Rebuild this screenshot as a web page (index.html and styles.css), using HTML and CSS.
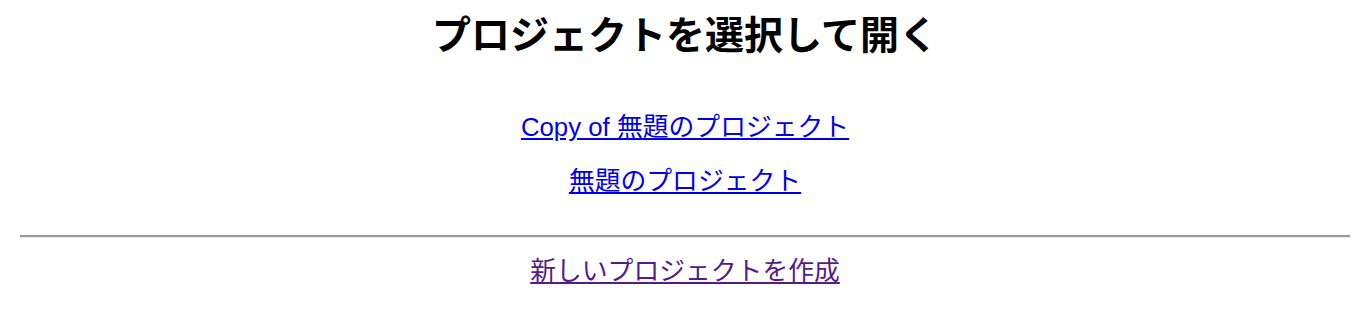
FILE: index.html
```html
<!DOCTYPE html>
<html>
<head>
  <meta charset="utf-8">
  <title>プロジェクトを選択して開く</title>
  <link rel="stylesheet" href="styles.css">
</head>
<body>
  <div class="page">
    <h1 class="page-title">プロジェクトを選択して開く</h1>

    <!-- 既存のプロジェクト -->
    <ul class="project-list">
      <li class="project-item"><a href="#copy">Copy of 無題のプロジェクト</a></li>
      <li class="project-item"><a href="#untitled">無題のプロジェクト</a></li>
    </ul>

    <hr class="divider">

    <div class="project-item">
      <a class="visited" href="#new">新しいプロジェクトを作成</a>
    </div>
  </div>
</body>
</html>
```

FILE: styles.css
```css
body {
  margin: 0;
  padding: 0;
  background: #fff;
  color: #000;
  font-family: "Liberation Sans", "Noto Sans CJK JP", sans-serif;
}

.page {
  padding: 8px 2px 0 20px;
  text-align: center;
}

.page-title {
  margin: 0;
  font-size: 39px;
  line-height: 56px;
  font-weight: 700;
}

.project-list {
  list-style: none;
  margin: 36px 0 0;
  padding: 0;
}

.project-item {
  margin: 0;
  font-size: 25.8px;
  line-height: 54px;
}

.project-item a {
  color: #0000ee;
}

.project-item a.visited {
  color: #551a8b;
}

.divider {
  margin: 27px 0 6px;
  height: 0;
  border: none;
  border-top: 2px solid #9a9a9a;
  border-bottom: 1px solid #eeeeee;
}
```
